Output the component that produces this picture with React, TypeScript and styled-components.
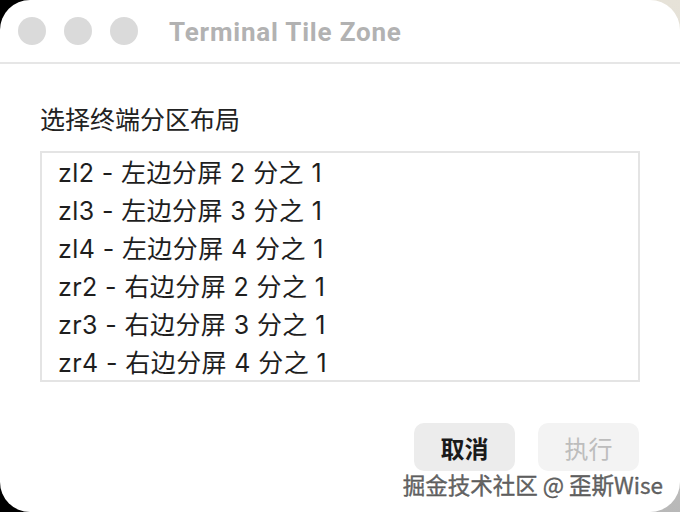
import React from "react";
import styled, { createGlobalStyle } from "styled-components";

const Global = createGlobalStyle`
  html, body {
    margin: 0;
    padding: 0;
    width: 680px;
    height: 512px;
    overflow: hidden;
    background:
      linear-gradient(to right, #000 0 50%, transparent 50% 100%),
      linear-gradient(to bottom, #e6e2d8 0%, #dcd9d2 50%, #b8b8b8 100%);
  }
  * { box-sizing: border-box; }
`;

const Window = styled.div`
  width: 680px;
  height: 512px;
  background: #fff;
  border-radius: 30px;
  position: relative;
  display: flex;
  flex-direction: column;
  font-family: "Inter", "Noto Sans CJK SC", sans-serif;
  overflow: hidden;
`;

const TitleBar = styled.div`
  height: 64px;
  flex: none;
  display: flex;
  align-items: center;
  padding-left: 18px;
  border-bottom: 2px solid #e6e6e6;
`;

const Lights = styled.div`
  display: flex;
  gap: 18px;
  margin-right: 31px;
`;

const Light = styled.span`
  width: 28px;
  height: 28px;
  border-radius: 50%;
  background: #dadada;
`;

const Title = styled.div`
  font-family: "Roboto", "Inter", sans-serif;
  font-weight: 700;
  font-size: 26px;
  color: #b2b2b2;
  letter-spacing: 0.8px;
  margin-top: 2px;
`;

const Body = styled.div`
  flex: 1;
  display: flex;
  flex-direction: column;
  padding: 39px 40px 0 40px;
`;

const Label = styled.div`
  font-size: 25px;
  color: #222;
  line-height: 34px;
  margin-bottom: 14px;
`;

const ListBox = styled.div`
  width: 600px;
  height: 231px;
  border: 2px solid #e4e4e4;
  padding: 1px 0 0 16px;
  display: flex;
  flex-direction: column;
`;

const Item = styled.div`
  height: 38px;
  line-height: 38px;
  font-size: 25px;
  letter-spacing: 0.4px;
  color: #1e1e1e;
  white-space: nowrap;
`;

const Actions = styled.div`
  display: flex;
  justify-content: flex-end;
  gap: 23px;
  margin-top: 41px;
  padding-right: 1px;
`;

const Button = styled.button<{ $disabled?: boolean }>`
  width: 101px;
  height: 48px;
  border: none;
  border-radius: 10px;
  background: ${(p) => (p.$disabled ? "#f3f3f3" : "#ececec")};
  color: ${(p) => (p.$disabled ? "#bdbdbd" : "#1a1a1a")};
  font-family: "Noto Sans CJK SC", sans-serif;
  font-weight: ${(p) => (p.$disabled ? 400 : 700)};
  font-size: 24px;
  padding: 0;
`;

const Watermark = styled.div`
  position: absolute;
  right: 17px;
  bottom: 14px;
  font-family: "Noto Sans CJK SC", sans-serif;
  font-size: 22.5px;
  color: #666;
  -webkit-text-stroke: 0.3px #444;
  text-shadow:
    1px 0 0 #fff, -1px 0 0 #fff, 0 1px 0 #fff, 0 -1px 0 #fff,
    1px 1px 0 #fff, -1px -1px 0 #fff, 1px -1px 0 #fff, -1px 1px 0 #fff;
  white-space: nowrap;
  line-height: 28px;
`;

const items = [
  "zl2 - 左边分屏 2 分之 1",
  "zl3 - 左边分屏 3 分之 1",
  "zl4 - 左边分屏 4 分之 1",
  "zr2 - 右边分屏 2 分之 1",
  "zr3 - 右边分屏 3 分之 1",
  "zr4 - 右边分屏 4 分之 1",
];

export default function App() {
  return (
    <>
      <Global />
      <Window>
        <TitleBar>
          <Lights>
            <Light />
            <Light />
            <Light />
          </Lights>
          <Title>Terminal Tile Zone</Title>
        </TitleBar>
        <Body>
          <Label>选择终端分区布局</Label>
          <ListBox>
            {items.map((t) => (
              <Item key={t}>{t}</Item>
            ))}
          </ListBox>
          <Actions>
            <Button>取消</Button>
            <Button $disabled>执行</Button>
          </Actions>
        </Body>
        <Watermark>掘金技术社区 @ 歪斯Wise</Watermark>
      </Window>
    </>
  );
}
